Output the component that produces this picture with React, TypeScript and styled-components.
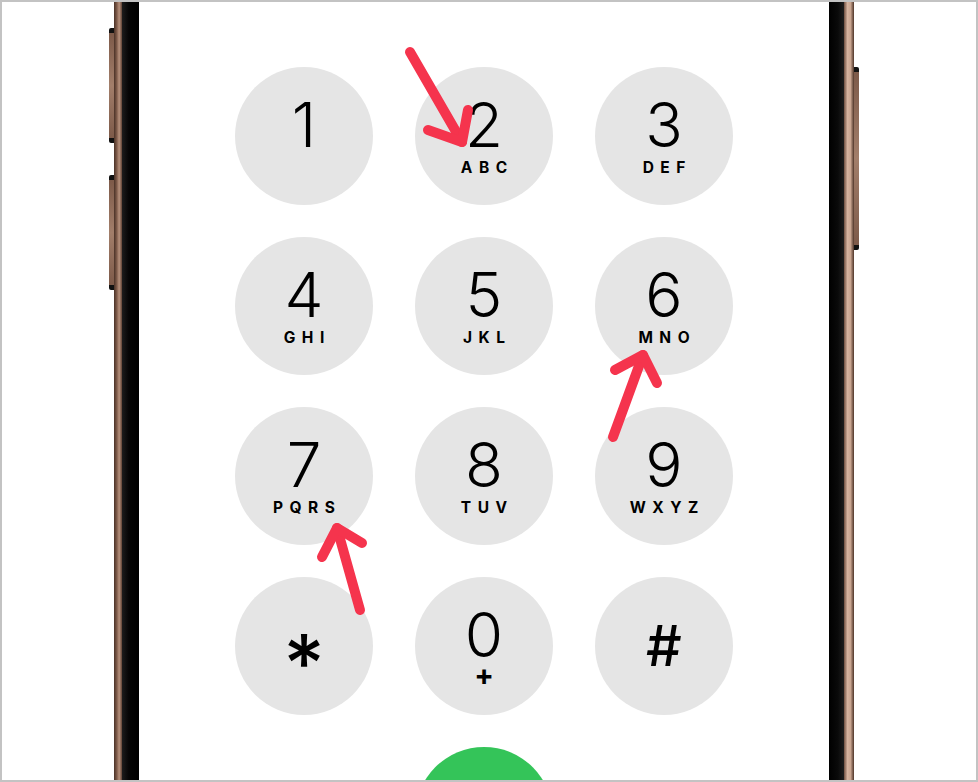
import styled, { createGlobalStyle } from 'styled-components';

const GlobalStyle = createGlobalStyle`
  html, body {
    margin: 0;
    padding: 0;
    background: #ffffff;
  }
`;

const Frame = styled.div`
  position: relative;
  box-sizing: border-box;
  width: 978px;
  height: 782px;
  border: 2px solid #c3c3c3;
  background: #ffffff;
  display: flex;
  overflow: hidden;
`;

const Gutter = styled.div<{ $width?: number }>`
  flex: ${(p) => (p.$width ? `0 0 ${p.$width}px` : '1 1 auto')};
`;

const ButtonRail = styled.div<{ $top: number }>`
  flex: 0 0 5px;
  display: flex;
  flex-direction: column;
  gap: 32px;
  padding-top: ${(p) => p.$top}px;
`;

const SideButton = styled.div<{ $height: number; $side: 'left' | 'right' }>`
  height: ${(p) => p.$height}px;
  border-radius: ${(p) => (p.$side === 'left' ? '2px 0 0 2px' : '0 2px 2px 0')};
  background: linear-gradient(
    180deg,
    #111 0,
    #111 5px,
    #7d5a49 5px,
    #a27e6a 50%,
    #7d5a49 calc(100% - 5px),
    #111 calc(100% - 5px),
    #111 100%
  );
`;

const Rim = styled.div<{ $width: number; $side: 'left' | 'right' }>`
  flex: 0 0 ${(p) => p.$width}px;
  background: ${(p) =>
    p.$side === 'left'
      ? 'linear-gradient(90deg, #4a3227 0%, #7e5b4a 35%, #b8927d 65%, #5e4235 100%)'
      : 'linear-gradient(90deg, #6f4f40 0%, #d6b4a0 35%, #c9a590 65%, #4e3428 100%)'};
`;

const Band = styled.div<{ $width: number; $side: 'left' | 'right' }>`
  flex: 0 0 ${(p) => p.$width}px;
  background: ${(p) =>
    p.$side === 'left'
      ? 'linear-gradient(90deg, #1c1c1c 0%, #050505 40%, #000 100%)'
      : 'linear-gradient(90deg, #000 0%, #0a0a0a 60%, #1e1e1e 100%)'};
`;

const Screen = styled.div`
  flex: 0 0 690px;
  display: flex;
  flex-direction: column;
  align-items: center;
  padding-top: 65px;
  overflow: hidden;
  background: #ffffff;
`;

const Keypad = styled.div`
  display: grid;
  grid-template-columns: repeat(3, 138px);
  column-gap: 42px;
  row-gap: 32px;
`;

const Key = styled.div<{ $symbol?: boolean }>`
  width: 138px;
  height: 138px;
  border-radius: 50%;
  background: #e5e5e5;
  display: flex;
  flex-direction: column;
  align-items: center;
  justify-content: ${(p) => (p.$symbol ? 'center' : 'flex-start')};
  padding-top: ${(p) => (p.$symbol ? 0 : 27)}px;
  box-sizing: border-box;
  color: #000;
  font-family: Inter, 'Noto Sans', sans-serif;
`;

const Digit = styled.span`
  font-size: 62px;
  line-height: 62px;
  font-weight: 350;
`;

const Letters = styled.span`
  margin-top: 4px;
  font-size: 15.5px;
  line-height: 15px;
  font-weight: 700;
  letter-spacing: 6.5px;
  padding-left: 6.5px;
`;

const Plus = styled.span`
  margin-top: -4px;
  font-size: 29px;
  line-height: 26px;
  font-weight: 700;
`;

const Star = styled.span`
  font-size: 80px;
  line-height: 80px;
  font-weight: 450;
  transform: translateY(17px);
`;

const Hash = styled.span`
  font-size: 56px;
  line-height: 56px;
  font-weight: 500;
`;

const CallButton = styled.div`
  flex: 0 0 138px;
  width: 138px;
  height: 138px;
  margin-top: 32px;
  border-radius: 50%;
  background: #34c459;
`;

const Annotations = styled.svg`
  position: absolute;
  top: -2px;
  left: -2px;
  width: 978px;
  height: 782px;
  pointer-events: none;
`;

const keys = [
  { d: '1', l: '' },
  { d: '2', l: 'ABC' },
  { d: '3', l: 'DEF' },
  { d: '4', l: 'GHI' },
  { d: '5', l: 'JKL' },
  { d: '6', l: 'MNO' },
  { d: '7', l: 'PQRS' },
  { d: '8', l: 'TUV' },
  { d: '9', l: 'WXYZ' },
];

const arrows = [
  { shaft: 'M410 52 L462 142', head: 'M428 130 L462 142 L468 110' },
  { shaft: 'M613 437 L643 355', head: 'M615 370 L643 355 L657 383' },
  { shaft: 'M360 610 L337 528', head: 'M322 557 L337 528 L362 543' },
];

function App() {
  return (
    <>
      <GlobalStyle />
      <Frame>
        <Gutter $width={107} />
        <ButtonRail $top={26}>
          <SideButton $side="left" $height={115} />
          <SideButton $side="left" $height={115} />
        </ButtonRail>
        <Rim $side="left" $width={8} />
        <Band $side="left" $width={17} />
        <Screen>
          <Keypad>
            {keys.map((k) => (
              <Key key={k.d}>
                <Digit>{k.d}</Digit>
                {k.l && <Letters>{k.l}</Letters>}
              </Key>
            ))}
            <Key $symbol>
              <Star>*</Star>
            </Key>
            <Key>
              <Digit>0</Digit>
              <Plus>+</Plus>
            </Key>
            <Key $symbol>
              <Hash>#</Hash>
            </Key>
          </Keypad>
          <CallButton />
        </Screen>
        <Band $side="right" $width={15} />
        <Rim $side="right" $width={10} />
        <ButtonRail $top={65}>
          <SideButton $side="right" $height={183} />
        </ButtonRail>
        <Gutter />
        <Annotations viewBox="0 0 978 782">
          {arrows.map((a, i) => (
            <g
              key={i}
              fill="none"
              stroke="#f5344d"
              strokeWidth={10}
              strokeLinecap="round"
              strokeLinejoin="round"
            >
              <path d={a.shaft} />
              <path d={a.head} />
            </g>
          ))}
        </Annotations>
      </Frame>
    </>
  );
}

export default App;
